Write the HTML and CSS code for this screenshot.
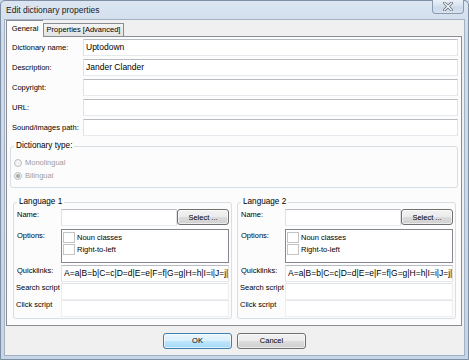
FILE: index.html
```html
<!DOCTYPE html>
<html>
<head>
<meta charset="utf-8">
<link rel="stylesheet" href="styles.css">
</head>
<body>
<div class="window">
  <div class="titlebar">
    <span class="title">Edit dictionary properties</span>
    <div class="close">
      <svg width="10" height="9" viewBox="0 0 10 9"><path d="M1.5 1 L8.5 8 M8.5 1 L1.5 8" stroke="#6d7785" stroke-width="3" stroke-linecap="square"/><path d="M1.5 1 L8.5 8 M8.5 1 L1.5 8" stroke="#ffffff" stroke-width="1.2" stroke-linecap="square"/></svg>
    </div>
  </div>
  <div class="client">
    <div class="tabs">
      <div class="tab active">General</div>
      <div class="tab">Properties [Advanced]</div>
    </div>
    <div class="pane">
      <div class="form">
        <span class="lbl">Dictionary name:</span><div class="edit">Uptodown</div>
        <span class="lbl">Description:</span><div class="edit">Jander Clander</div>
        <span class="lbl">Copyright:</span><div class="edit"></div>
        <span class="lbl">URL:</span><div class="edit"></div>
        <span class="lbl">Sound/images path:</span><div class="edit"></div>
      </div>
      <fieldset class="group dtype">
        <legend>Dictionary type:</legend>
        <div class="radio"><span class="rb"></span>Monolingual</div>
        <div class="radio"><span class="rb checked"></span>Bilingual</div>
      </fieldset>
      <div class="langs">
        <fieldset class="group lang">
          <legend>Language 1</legend>
          <div class="row"><span class="llbl">Name:</span><div class="edit grow"></div><button class="btn sel">Select ...</button></div>
          <div class="row optrow"><span class="llbl olbl">Options:</span>
            <div class="list">
              <div class="item"><span class="chk"></span>Noun classes</div>
              <div class="item"><span class="chk"></span>Right-to-left</div>
            </div>
          </div>
          <div class="row quick"><span class="llbl">Quicklinks:</span><div class="edit grow ql">A=a|B=b|C=c|D=d|E=e|F=f|G=g|H=h|I=i|J=j|</div></div>
          <div class="row search"><span class="llbl s">Search script</span><div class="edit grow faint"></div></div>
          <div class="row click"><span class="llbl s">Click script</span><div class="edit grow faint"></div></div>
        </fieldset>
        <fieldset class="group lang">
          <legend>Language 2</legend>
          <div class="row"><span class="llbl">Name:</span><div class="edit grow"></div><button class="btn sel">Select ...</button></div>
          <div class="row optrow"><span class="llbl olbl">Options:</span>
            <div class="list">
              <div class="item"><span class="chk"></span>Noun classes</div>
              <div class="item"><span class="chk"></span>Right-to-left</div>
            </div>
          </div>
          <div class="row quick"><span class="llbl">Quicklinks:</span><div class="edit grow ql">A=a|B=b|C=c|D=d|E=e|F=f|G=g|H=h|I=i|J=j|</div></div>
          <div class="row search"><span class="llbl s">Search script</span><div class="edit grow faint"></div></div>
          <div class="row click"><span class="llbl s">Click script</span><div class="edit grow faint"></div></div>
        </fieldset>
      </div>
    </div>
    <div class="buttons">
      <button class="btn dlg default">OK</button>
      <button class="btn dlg">Cancel</button>
    </div>
  </div>
</div>
</body>
</html>
```
FILE: styles.css
```css
* { box-sizing: border-box; }
html, body { margin: 0; padding: 0; }
body {
  width: 469px; height: 360px; overflow: hidden;
  font-family: "Liberation Sans", Arial, sans-serif;
  background: #c8d7e8;
  color: #000;
}
.window {
  width: 469px; height: 360px;
  border: 1px solid #7f8fa3;
  border-radius: 5px 5px 0 0;
  background: linear-gradient(to bottom, #dce6f2 0px, #cfdcec 30px, #c6d5e7 100%);
  display: flex; flex-direction: column;
}
.titlebar {
  height: 18px; flex: none;
  display: flex; align-items: flex-start;
}
.title {
  font-size: 8.5px; color: #1a1a1a;
  padding-left: 5px; line-height: 19px;
}
.close {
  margin-left: auto; margin-right: 4px; margin-top: -1px;
  width: 32px; height: 14px;
  border: 1px solid #8c9bb0; border-top: none;
  border-radius: 0 0 4px 4px;
  background: linear-gradient(to bottom, #eaf0f7, #d5e0ed 50%, #c9d7e8 51%, #d8e3f0);
  display: flex; align-items: center; justify-content: center;
}
.client {
  flex: 1;
  margin: 0 3px 3px 3px;
  border: 1px solid #a3b1c3;
  background: #f0f0f0;
  display: flex; flex-direction: column;
}
.tabs {
  height: 16px; flex: none;
  display: flex; align-items: flex-end;
  padding-left: 1px;
  font-size: 7.5px;
}
.tab {
  height: 13px; width: 81px;
  border: 1px solid #898c95; border-bottom: none;
  background: linear-gradient(to bottom, #f4f4f4, #e3e3e3);
  color: #000; text-align: center; line-height: 12px;
}
.tab.active {
  width: 37px; height: 17px; margin-bottom: -1px;
  background: #fcfcfc; position: relative; z-index: 1;
  border-right: none; line-height: 15px;
}
.pane {
  height: 290px; flex: none;
  margin: 0 2px 0 1px;
  border: 1px solid #898c95;
  background: #fcfcfc;
  padding: 2px 3px 0 3px;
  font-size: 7.5px; color: #000;
}
.form {
  display: grid;
  grid-template-columns: 73px 1fr;
  grid-auto-rows: 17px;
  row-gap: 3px;
  align-items: center;
}
.lbl { padding-left: 2px; line-height: 10px; white-space: nowrap; color: #000; }
.edit {
  height: 17px;
  border: 1px solid;
  border-color: #b7bbc2 #dfe3e8 #e6eaee #dfe3e8;
  background: #fff;
  font-size: 8.5px; line-height: 15px;
  padding-left: 2px;
  white-space: nowrap; overflow: hidden;
  color: #000;
}
.edit.faint { border-color: #e2e5e9 #eceef1 #eef0f2 #eceef1; }
.group {
  margin: 0; padding: 0;
  border: 1px solid #d5dfe5;
  border-radius: 3px;
  min-width: 0;
}
.group legend {
  padding: 0 2px; margin-left: 0;
  font-size: 8.2px; line-height: 10px; color: #000;
}
.dtype {
  margin-top: 5px;
  padding: 5px 3px 5px 3px;
}
.radio {
  height: 13px;
  display: flex; align-items: center; gap: 3px;
  color: #9c9c9c;
}
.rb {
  width: 8px; height: 8px; border-radius: 50%;
  border: 1px solid #bdbdbd;
  background: #f3f3f3;
  display: flex; align-items: center; justify-content: center;
}
.rb.checked::after {
  content: ""; width: 4px; height: 4px; border-radius: 50%;
  background: #a9a9a9;
}
.langs {
  margin: 9px 2px 0 3px;
  display: flex; gap: 5px;
}
.lang {
  flex: 1;
  padding: 2px 2px 1px 3px;
}
.row { display: flex; align-items: flex-start; height: 17px; }
.llbl { width: 44px; flex: none; line-height: 10px; padding-top: 1px; white-space: nowrap; color: #000; }
.llbl.s { padding-top: 0; margin-left: -1px; margin-right: 1px; }
.grow { flex: 1; }
.sel {
  width: 52px; height: 16px; margin-left: 3px; margin-right: 1px; flex: none;
}
.optrow { height: 34px; margin-top: 3px; }
.olbl { padding-top: 2px; color: #000; }
.list {
  flex: 1; height: 34px;
  border: 1px solid #828790;
  background: #fff;
  padding: 1px 0 0 1px;
}
.item {
  height: 12px; display: flex; align-items: center;
  font-size: 7.5px; color: #000;
}
.chk {
  width: 12px; height: 11px;
  border: 1px solid #c4c4c4;
  background: #fff;
  margin-right: 2px;
}
.quick { margin-top: 2px; }
.search { margin-top: 1px; }
.click { margin-top: 0; }
.ql { font-size: 8.5px; padding-left: 2px; }
.btn {
  font-family: "Liberation Sans", Arial, sans-serif;
  font-size: 7.5px; color: #000;
  border: 1px solid #707070; border-radius: 3px;
  background: linear-gradient(to bottom, #f2f2f2 0%, #ebebeb 50%, #dddddd 50%, #cfcfcf 100%);
  padding: 0; margin: 0;
  box-shadow: inset 0 0 0 1px rgba(255,255,255,0.6);
}
.buttons {
  flex: 1;
  display: flex; align-items: center; justify-content: center; gap: 5px;
}
.dlg { width: 69px; height: 16px; }
.default {
  border-color: #3c7fb1;
  background: linear-gradient(to bottom, #eaf6fd 0%, #d9f0fc 50%, #bee6fd 50%, #a7d9f5 100%);
}
```
